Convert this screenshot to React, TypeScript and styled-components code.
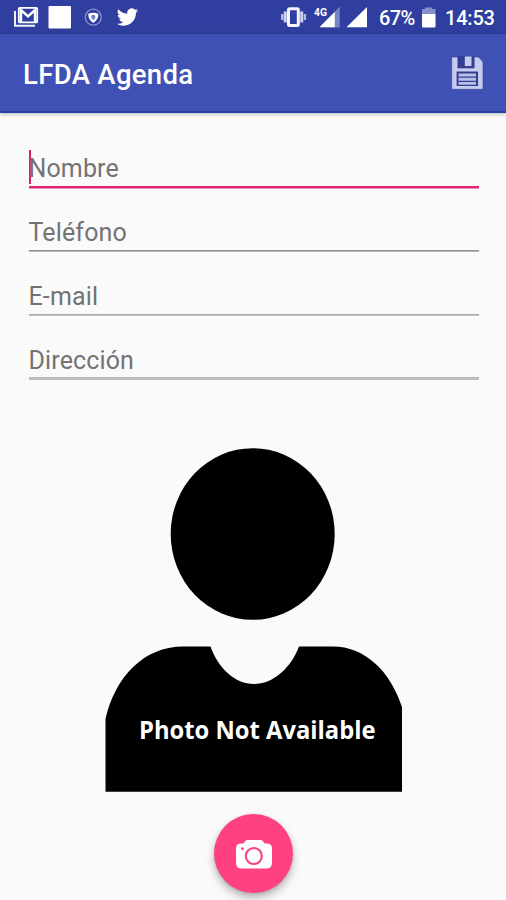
import React from 'react';
import styled, { createGlobalStyle } from 'styled-components';

const GlobalStyle = createGlobalStyle`
  * { box-sizing: border-box; }
  body { margin: 0; background: #fafafa; font-family: Roboto, sans-serif; }
`;

const Screen = styled.div`
  width: 506px;
  height: 900px;
  display: flex;
  flex-direction: column;
  overflow: hidden;
  background: #fafafa;
`;

const StatusBar = styled.div`
  height: 34px;
  flex: none;
  display: flex;
  align-items: flex-start;
  justify-content: space-between;
  padding: 0 11px 0 12px;
  background: #303f9f;
  color: #fff;
`;

const StatusGroup = styled.div`
  display: flex;
  height: 34px;
`;

const StatusIcon = styled.svg<{ $gap?: number }>`
  display: block;
  flex: none;
  margin-right: ${({ $gap = 0 }) => $gap}px;
`;

const StatusText = styled.span<{ $width: number; $gap?: number; $tracking?: number }>`
  width: ${({ $width }) => $width}px;
  margin-right: ${({ $gap = 0 }) => $gap}px;
  font-size: 20px;
  font-weight: 500;
  line-height: 37px;
  letter-spacing: ${({ $tracking = 0 }) => $tracking}px;
  white-space: nowrap;
`;

const AppBar = styled.header`
  height: 79px;
  flex: none;
  display: flex;
  align-items: center;
  justify-content: space-between;
  padding: 3px 20px 0 23px;
  background: #3f51b5;
  border-bottom: 2px solid #2440a4;
  box-shadow: 0 1px 4px rgba(0, 0, 0, 0.28);
`;

const Title = styled.h1`
  margin: 1px 0 0;
  color: #fff;
  font-size: 27.5px;
  font-weight: 500;
  line-height: 36px;
  letter-spacing: 0.32px;
`;

const IconButton = styled.button`
  width: 36px;
  height: 38px;
  padding: 0;
  border: 0;
  background: none;
`;

const Form = styled.form`
  flex: none;
  display: flex;
  flex-direction: column;
  padding: 36px 27.5px 0 28.5px;
`;

const Field = styled.label<{ $line: string; $top: number; $thickness: number }>`
  height: 64px;
  display: flex;
  align-items: flex-start;
  background: linear-gradient(${({ $line }) => $line}, ${({ $line }) => $line}) no-repeat
    0 ${({ $top }) => $top}px / 100% ${({ $thickness }) => $thickness}px;
`;

const Hint = styled.span`
  color: #737373;
  font-size: 25px;
  line-height: 39px;
  letter-spacing: 0.14px;
`;

const Caret = styled.i`
  width: 2px;
  height: 34px;
  margin: 1px -2px 0 0;
  background: #e01c68;
`;

const Photo = styled.svg`
  display: block;
  flex: none;
  align-self: center;
  margin: 43px 0 0 2px;
`;

const PhotoCaption = styled.text`
  font-family: 'Open Sans', 'Noto Sans', sans-serif;
  font-size: 25.5px;
  font-weight: 700;
  fill: #fff;
`;

const CameraButton = styled.button`
  width: 79px;
  height: 79px;
  flex: none;
  align-self: center;
  margin: 21px 0 0 1px;
  padding: 0;
  border: 0;
  border-radius: 50%;
  display: flex;
  align-items: center;
  justify-content: center;
  background: #ff4081;
  box-shadow: 0 5px 9px rgba(0, 0, 0, 0.27), 0 1px 3px rgba(0, 0, 0, 0.12);
`;

const fields = [
  { label: 'Nombre', line: '#e3236f', top: 37, thickness: 2.5, focused: true },
  { label: 'Teléfono', line: '#929292', top: 37, thickness: 1.7 },
  { label: 'E-mail', line: '#a9a9a9', top: 37, thickness: 1.7 },
  { label: 'Dirección', line: '#bcbcbc', top: 36, thickness: 3 },
];

const MailIcon = () => (
  <StatusIcon $gap={8} width="28" height="34" viewBox="12 0 28 34">
    <path d="M15 11v14.8h20" fill="none" stroke="#eef1ff" strokeWidth="2" />
    <rect x="18.8" y="7.8" width="18.4" height="14.6" rx="1" fill="none" stroke="#fff" strokeWidth="1.8" />
    <path d="M21 22V10l7 6.400 7-6.400v12" fill="none" stroke="#fff" strokeWidth="2.4" />
  </StatusIcon>
);

const SquareIcon = () => (
  <StatusIcon $gap={12} width="24" height="34" viewBox="48 0 24 34">
    <rect x="48.5" y="6" width="22.5" height="22.5" rx="1" fill="#fff" />
  </StatusIcon>
);

const ShieldIcon = () => (
  <StatusIcon $gap={12} width="20" height="34" viewBox="84 0 20 34">
    <circle cx="93.3" cy="17.2" r="8" fill="none" stroke="#8791d0" strokeWidth="1.3" />
    <path d="M88.3 13.8q5-2.2 10 0 .2 5.9-5 9.2-5.200-3.300-5-9.200z" fill="#fff" />
    <path d="M93.300 14.700q2.200 0 2.200 2.100-.3 2-2.200 3.400-1.900-1.400-2.200-3.400 0-2.100 2.200-2.100z" fill="#7480c7" />
  </StatusIcon>
);

const TwitterIcon = () => (
  <StatusIcon width="23" height="34" viewBox="-1 -8.500 26 38.400">
    <path
      transform="translate(0 -1.200)"
      fill="#fff"
      d="M23.950 4.570a10 10 0 0 1-2.820.770 4.960 4.960 0 0 0 2.160-2.720c-.950.550-2 .950-3.130 1.180a4.920 4.920 0 0 0-8.380 4.480C7.690 8.090 4.070 6.130 1.640 3.160a4.920 4.920 0 0 0 1.520 6.570 4.900 4.900 0 0 1-2.230-.610v.060a4.920 4.920 0 0 0 3.950 4.830 5 5 0 0 1-2.210.080 4.940 4.940 0 0 0 4.600 3.420A9.870 9.870 0 0 1 0 19.540a14 14 0 0 0 7.550 2.210c9.050 0 14-7.500 14-13.980 0-.210 0-.420-.020-.630a9.940 9.940 0 0 0 2.420-2.570z"
    />
  </StatusIcon>
);

const VibrateIcon = () => (
  <StatusIcon $gap={5} width="28" height="34" viewBox="280 0 28 34">
    <rect x="288.500" y="8.800" width="9.800" height="16.700" rx="1" fill="none" stroke="#f4f5ff" strokeWidth="3" />
    <path d="M285.300 11.500v11M301.700 11.500v11" stroke="#cdd2f1" strokeWidth="3" />
    <path d="M282.300 14v6M304.900 14v6" stroke="#b5bde6" strokeWidth="2.400" />
  </StatusIcon>
);

const NetworkLabel = styled.text`
  font: 700 10.5px Roboto, sans-serif;
  fill: #fff;
`;

const SignalIcon = () => (
  <StatusIcon $gap={6} width="27" height="34" viewBox="313 0 27 34">
    <path d="M319.500 27.300 339.500 7v20.300z" fill="#7883c5" />
    <path d="M319.500 27.300 335 11.500v15.800z" fill="#fff" />
    <path d="M326.500 7h8v5l-5.500 5h-2.500z" fill="#303f9f" />
    <NetworkLabel x="314" y="16" textLength="13" lengthAdjust="spacingAndGlyphs">4G</NetworkLabel>
    <path d="M334.800 11.700 339.500 7v20.300h-4.700z" fill="#7883c5" />
  </StatusIcon>
);

const FullSignalIcon = () => (
  <StatusIcon $gap={11} width="22" height="34" viewBox="346 0 22 34">
    <path d="M346.500 27.300 367 7v20.300z" fill="#fff" />
  </StatusIcon>
);

const BatteryIcon = () => (
  <StatusIcon $gap={9} width="15" height="34" viewBox="421 0 15 34">
    <path d="M422 14.500V10q0-1 1-1h2V7.500h7V9h2.500q1 0 1 1v4.500z" fill="#8690cd" />
    <path d="M422 14h13.500v12.500q0 1-1 1H423q-1 0-1-1z" fill="#fff" />
  </StatusIcon>
);

const SaveIcon = () => (
  <svg width="36" height="38" viewBox="450 56 36 38" aria-hidden="true">
    <path d="M452.500 58h26l4.500 5v26.500q0 .8-.8.8h-29.700q-.8 0-.8-.8V58.800q0-.8.8-.8z" fill="#c7ccee" stroke="#34429b" strokeWidth=".6" />
    <path d="M457.500 57.500h17v11.800h-17z" fill="#303f91" />
    <path d="M464.800 57.500h6.700v9.500h-6.700z" fill="#c7ccee" />
    <path d="M456.600 72.500h21.400v14.500h-21.400z" fill="#303f91" />
    <path d="M458.500 74.500h17.500v3h-17.500zM458.500 78.700h17.500v3h-17.500zM458.500 82.900h17.500v2.800h-17.500z" fill="#b9c0e8" />
  </svg>
);

const CameraIcon = () => (
  <svg width="38" height="32" viewBox="235 838 38 32" aria-hidden="true">
    <path d="M247 840h14q1 0 1.700 1l1.800 2.500h2.500q5 0 5 5V863q0 5.500-5.500 5.500h-25q-5.500 0-5.500-5.500v-14.500q0-5 5-5h2.500l1.800-2.500q.7-1 1.700-1z" fill="#fff" />
    <circle cx="253.800" cy="856" r="8" fill="none" stroke="#ff4081" strokeWidth="2.200" />
    <circle cx="242.400" cy="848.700" r="1.400" fill="#ff4081" />
  </svg>
);

const PersonPhoto = () => (
  <Photo width="300" height="345" viewBox="104 448 300 345" role="img">
    <ellipse cx="252.700" cy="534" rx="82" ry="85.800" />
    <path d="M105.500 719C115 677 144 646.500 183 646.500h27.500C218 668 235 684 254 684s37-16 45-37.500h34C364 646.500 390 670 402 707v84.700H105.500z" />
    <PhotoCaption x="139" y="738.500" textLength="236.500" lengthAdjust="spacingAndGlyphs">Photo Not Available</PhotoCaption>
  </Photo>
);

export default function App() {
  return (
    <Screen>
      <GlobalStyle />
      <StatusBar>
        <StatusGroup>
          <MailIcon />
          <SquareIcon />
          <ShieldIcon />
          <TwitterIcon />
        </StatusGroup>
        <StatusGroup>
          <VibrateIcon />
          <SignalIcon />
          <FullSignalIcon />
          <StatusText $width={37} $gap={5} $tracking={-0.6}>67%</StatusText>
          <BatteryIcon />
          <StatusText $width={50} $tracking={-0.2}>14:53</StatusText>
        </StatusGroup>
      </StatusBar>
      <AppBar>
        <Title>LFDA Agenda</Title>
        <IconButton aria-label="Guardar"><SaveIcon /></IconButton>
      </AppBar>
      <Form>
        {fields.map(({ label, line, top, thickness, focused }) => (
          <Field key={label} $line={line} $top={top} $thickness={thickness}>
            {focused && <Caret />}
            <Hint>{label}</Hint>
          </Field>
        ))}
      </Form>
      <PersonPhoto />
      <CameraButton aria-label="Tomar foto"><CameraIcon /></CameraButton>
    </Screen>
  );
}
